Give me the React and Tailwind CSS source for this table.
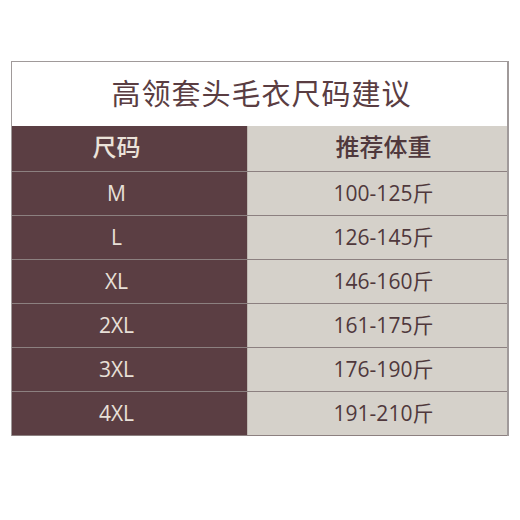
const rows = [
  ['M', '100-125斤'],
  ['L', '126-145斤'],
  ['XL', '146-160斤'],
  ['2XL', '161-175斤'],
  ['3XL', '176-190斤'],
  ['4XL', '191-210斤'],
];

export default function App() {
  return (
    <div
      className="w-[520px] h-[520px] bg-white pt-[61px] pl-[11px]"
      style={{ fontFamily: '"Open Sans", "Noto Sans CJK SC", sans-serif' }}
    >
      <div className="w-[498px] border border-[#a09a9a] border-b-0 border-r-2">
        <div className="h-[64px] flex items-center justify-center text-[29px] text-[#5a3d42] tracking-[1px] pl-[4px]">
          高领套头毛衣尺码建议
        </div>
        <div className="flex h-[45px] text-[24px] font-medium">
          <div className="w-[235px] bg-[#5b3e43] text-[#ebe3da] flex items-center justify-center pb-[3px] pr-[26px]">尺码</div>
          <div className="flex-1 bg-[#d5d1ca] text-[#4f383c] flex items-center justify-center pb-[3px] pl-[12px] border-l border-[#bdb7b0]">推荐体重</div>
        </div>
        {rows.map(([size, weight]) => (
          <div key={size} className="flex h-[44px] text-[21px] border-t border-[#8c8080]">
            <div className="w-[235px] bg-[#5b3e43] text-[#e8e0d8] flex items-center justify-center pr-[26px]">{size}</div>
            <div className="flex-1 bg-[#d5d1ca] text-[#4f383c] flex items-center justify-center pl-[12px] border-l border-[#bdb7b0]">{weight}</div>
          </div>
        ))}
        <div className="h-px bg-[#8c8080]" />
      </div>
    </div>
  );
}
